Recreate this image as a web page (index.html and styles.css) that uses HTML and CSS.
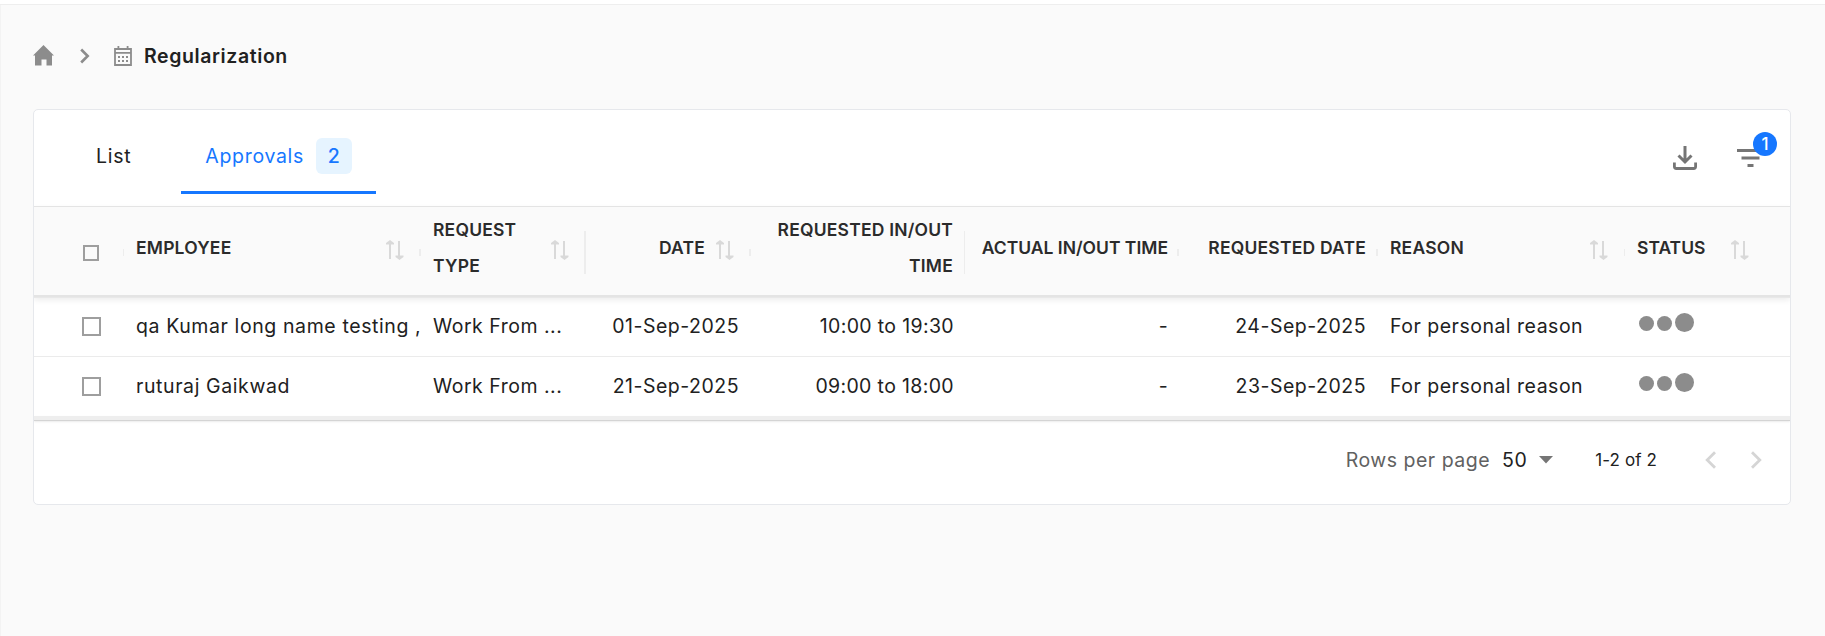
FILE: index.html
```html
<!DOCTYPE html>
<html lang="en">
<head>
    <meta charset="UTF-8">
    <meta name="viewport" content="width=device-width, initial-scale=1.0">
    <title>Regularization</title>
    <link rel="stylesheet" href="styles.css">
</head>
<body>
    <header class="topbar"></header>

    <main class="page">
        <nav class="breadcrumb">
            <svg class="home-icon" width="22" height="21" viewBox="0 0 22 21"><path d="M10.5 0 L21 10.5 H19 V20.5 H13.5 V14.5 H8.5 V20.5 H2 V10.5 H0 Z" fill="#8c8c8c"/></svg>
            <svg class="crumb-arrow" width="10" height="16" viewBox="0 0 10 16"><path d="M1.2 1.5 L7.7 8 L1.2 14.5" fill="none" stroke="#8c8c8c" stroke-width="2.6"/></svg>
            <svg class="calendar-icon" width="18" height="20" viewBox="0 0 18 20">
                <path d="M1 3 H17 V19 H1 Z M1 6.8 H17 M4.4 0 V3 M13.6 0 V3" fill="none" stroke="#8c8c8c" stroke-width="1.8"/>
                <path d="M4 10 h2 v2 h-2z M8 10 h2 v2 h-2z M12 10 h2 v2 h-2z M4 14 h2 v2 h-2z M8 14 h2 v2 h-2z M12 14 h2 v2 h-2z" fill="#8c8c8c"/>
            </svg>
            <span class="crumb-title">Regularization</span>
        </nav>

        <section class="card">
            <div class="toolbar">
                <div class="tabs">
                    <a class="tab">List</a>
                    <a class="tab active">Approvals <span class="tab-count">2</span></a>
                </div>
                <div class="actions">
                    <svg class="download-icon" width="24" height="24" viewBox="0 0 24 24">
                        <path d="M12 0 V15.5 M5.5 9.5 L12 16 L18.5 9.5" fill="none" stroke="#757575" stroke-width="3"/>
                        <path d="M1.4 16.5 V20.5 Q1.4 22.5 3.4 22.5 H20.6 Q22.6 22.5 22.6 20.5 V16.5" fill="none" stroke="#757575" stroke-width="2.8"/>
                    </svg>
                    <div class="filter">
                        <svg width="27" height="18" viewBox="0 0 27 18"><path d="M0 0 H27 V3 H0 Z M4.5 7.5 H22.5 V10.5 H4.5 Z M10.5 15 H16.5 V18 H10.5 Z" fill="#757575"/></svg>
                        <span class="badge">1</span>
                    </div>
                </div>
            </div>

            <div class="row head">
                <div class="cell check"><span class="box small"></span></div>
                <div class="cell"><span>EMPLOYEE</span><svg class="sort" width="18" height="20"><use href="#sort"/></svg></div>
                <div class="cell tall"><span>REQUEST<br>TYPE</span><svg class="sort" width="18" height="20"><use href="#sort"/></svg></div>
                <div class="cell right"><span>DATE</span><svg class="sort" width="18" height="20"><use href="#sort"/></svg></div>
                <div class="cell right tall thin"><span>REQUESTED IN/OUT<br>TIME</span></div>
                <div class="cell right tight"><span>ACTUAL IN/OUT TIME</span></div>
                <div class="cell right"><span>REQUESTED DATE</span></div>
                <div class="cell thin"><span>REASON</span><svg class="sort" width="18" height="20"><use href="#sort"/></svg></div>
                <div class="cell last tight"><span>STATUS</span><svg class="sort" width="18" height="20"><use href="#sort"/></svg></div>
            </div>

            <div class="row">
                <div class="cell check"><span class="box"></span></div>
                <div class="cell name"><span>qa Kumar long name testing ,</span></div>
                <div class="cell"><span>Work From ...</span></div>
                <div class="cell right"><span>01-Sep-2025</span></div>
                <div class="cell right time"><span>10:00 to 19:30</span></div>
                <div class="cell right time"><span>-</span></div>
                <div class="cell right"><span>24-Sep-2025</span></div>
                <div class="cell"><span>For personal reason</span></div>
                <div class="cell status"><i class="dot"></i><i class="dot"></i><i class="dot big"></i></div>
            </div>
            <div class="row">
                <div class="cell check"><span class="box"></span></div>
                <div class="cell name"><span>ruturaj Gaikwad</span></div>
                <div class="cell"><span>Work From ...</span></div>
                <div class="cell right"><span>21-Sep-2025</span></div>
                <div class="cell right time"><span>09:00 to 18:00</span></div>
                <div class="cell right time"><span>-</span></div>
                <div class="cell right"><span>23-Sep-2025</span></div>
                <div class="cell"><span>For personal reason</span></div>
                <div class="cell status"><i class="dot"></i><i class="dot"></i><i class="dot big"></i></div>
            </div>

            <div class="divider"></div>
            <div class="pager">
                <span class="pager-label">Rows per page</span>
                <span class="pager-size">50</span>
                <svg class="caret" width="14" height="8"><path d="M0 0 H14 L7 7.5 Z" fill="#757575"/></svg>
                <span class="pager-range">1-2 of 2</span>
                <svg class="prev" width="12" height="18"><path d="M10 1.2 L2.2 9 L10 16.8" fill="none" stroke="#d5d5d5" stroke-width="2.8"/></svg>
                <svg class="next" width="12" height="18"><path d="M2 1.2 L9.8 9 L2 16.8" fill="none" stroke="#d5d5d5" stroke-width="2.8"/></svg>
            </div>
        </section>
    </main>

    <svg class="defs">
        <symbol id="sort" viewBox="0 0 18 20"><path d="M3 19 V4.5 H0 V3 L4 0 L8 3 V4.5 H5 V19 Z M12 1 V15.5 H9.5 V17 L13.5 20 L17.5 17 V15.5 H14 V1 Z" fill="#d9d9d9"/></symbol>
    </svg>
</body>
</html>
```
FILE: styles.css
```css
* {
    box-sizing: border-box;
}
body {
    margin: 0;
    background-color: #fafafa;
    color: #212121;
    font-family: Inter, 'Liberation Sans', sans-serif;
    font-size: 19.5px;
    letter-spacing: 0.5px;
}
svg {
    display: block;
    flex: none;
}
.defs {
    display: none;
}
.topbar {
    height: 5px;
    background: white;
    border-bottom: 1px solid #eeeeee;
}
.page {
    min-height: 631px;
    padding: 35px 34px 0 32px;
    border-left: 1px solid #f3f3f3;
}
.breadcrumb {
    display: flex;
    align-items: center;
    height: 32px;
}
.home-icon {
    margin-top: -1px;
}
.crumb-arrow {
    margin-left: 25px;
}
.calendar-icon {
    margin-left: 24px;
}
.crumb-title {
    margin-left: 12px;
    font-weight: 600;
    letter-spacing: 0.6px;
}
.card {
    margin-top: 37px;
    height: 396px;
    background: white;
    border: 1px solid #e6e8ec;
    border-radius: 5px;
    overflow: hidden;
}

/* tabs */
.toolbar {
    display: flex;
    justify-content: space-between;
    height: 96px;
}
.tabs {
    display: flex;
    padding-left: 37px;
    letter-spacing: 0.7px;
}
.tab {
    display: flex;
    align-items: center;
    height: 84px;
    padding: 11px 24px 0 25px;
    border-bottom: 3px solid transparent;
}
.tab.active {
    margin-left: 26px;
    padding-left: 24px;
    color: #1677ff;
    border-bottom-color: #1677ff;
}
.tab-count {
    width: 36px;
    margin-left: 12px;
    line-height: 36px;
    text-align: center;
    font-weight: 500;
    background: #e6f4ff;
    border-radius: 6px;
}
.actions {
    display: flex;
    padding: 36px 26px 0 0;
    gap: 40px;
}
.filter {
    position: relative;
    padding-top: 3px;
}
.badge {
    position: absolute;
    top: -14px;
    left: 16px;
    width: 24px;
    line-height: 24px;
    border-radius: 12px;
    background: #1677ff;
    color: white;
    font-size: 17px;
    font-weight: 500;
    letter-spacing: 0;
    text-align: center;
}

/* table */
.row {
    display: grid;
    grid-template-columns: 90px 297px 165px 165px 214px 214px 199px 247px 165px;
    height: 60px;
    border-bottom: 1px solid #ebebeb;
}
.cell {
    position: relative;
    display: flex;
    align-items: center;
    padding: 0 12px 1px;
    white-space: nowrap;
}
.cell.name {
    padding-right: 0;
    overflow: hidden;
    letter-spacing: 0.6px;
}
.cell.right {
    justify-content: flex-end;
    text-align: right;
}
.cell.time {
    padding-right: 11px;
    letter-spacing: 0.35px;
}
.row.head {
    position: relative;
    z-index: 1;
    height: 91px;
    color: #2b2b2b;
    background: #fafafa;
    border-top: 1px solid #e4e4e4;
    border-bottom: 2px solid #e4e4e4;
    box-shadow: 0 1px 0 #e8e8e8, 0 3px 6px rgba(0, 0, 0, 0.08);
    font-size: 17.5px;
    font-weight: 600;
    line-height: 36px;
    letter-spacing: 0.2px;
}
.head .cell {
    padding-bottom: 6px;
}
.head .cell.tight {
    padding-right: 11px;
    letter-spacing: 0;
}
.head .cell::after {
    content: '';
    position: absolute;
    right: 0;
    top: 42px;
    width: 2px;
    height: 7px;
    background: #ededed;
}
.head .cell.tall::after {
    top: 24px;
    height: 43px;
}
.head .cell.thin::after,
.head .cell.check::after {
    width: 1px;
}
.head .cell.last::after {
    display: none;
}
.sort {
    margin: 3px 5px 0 auto;
}
.right .sort {
    margin-left: 11px;
}
.last .sort {
    margin-right: 30px;
}
.box {
    width: 19px;
    height: 19px;
    margin-left: 36px;
    border: 2px solid #9e9e9e;
    background: white;
}
.box.small {
    width: 16px;
    height: 16px;
    margin: 10px 0 0 37px;
    background: transparent;
}
.cell.status {
    gap: 3px;
    padding: 0 0 7px 14px;
}
.dot {
    width: 15px;
    height: 15px;
    border-radius: 50%;
    background: #8c8c8c;
}
.dot.big {
    width: 19px;
    height: 19px;
    margin-top: -2px;
}

/* pagination */
.divider {
    position: relative;
    height: 5px;
    margin-top: -1px;
    background: #eeeeee;
    border-bottom: 1px solid #d4d4d4;
    box-shadow: 0 1px 2px rgba(0, 0, 0, 0.08);
}
.pager {
    display: flex;
    align-items: center;
    justify-content: flex-end;
    height: 83px;
    padding: 0 28px 5px 0;
}
.pager-label {
    color: #616161;
}
.pager-size {
    margin: 0 12px 1px;
}
.pager-range {
    margin: 0 48px 0 42px;
    font-size: 17px;
    letter-spacing: 0.1px;
}
.next {
    margin-left: 33px;
}
```
